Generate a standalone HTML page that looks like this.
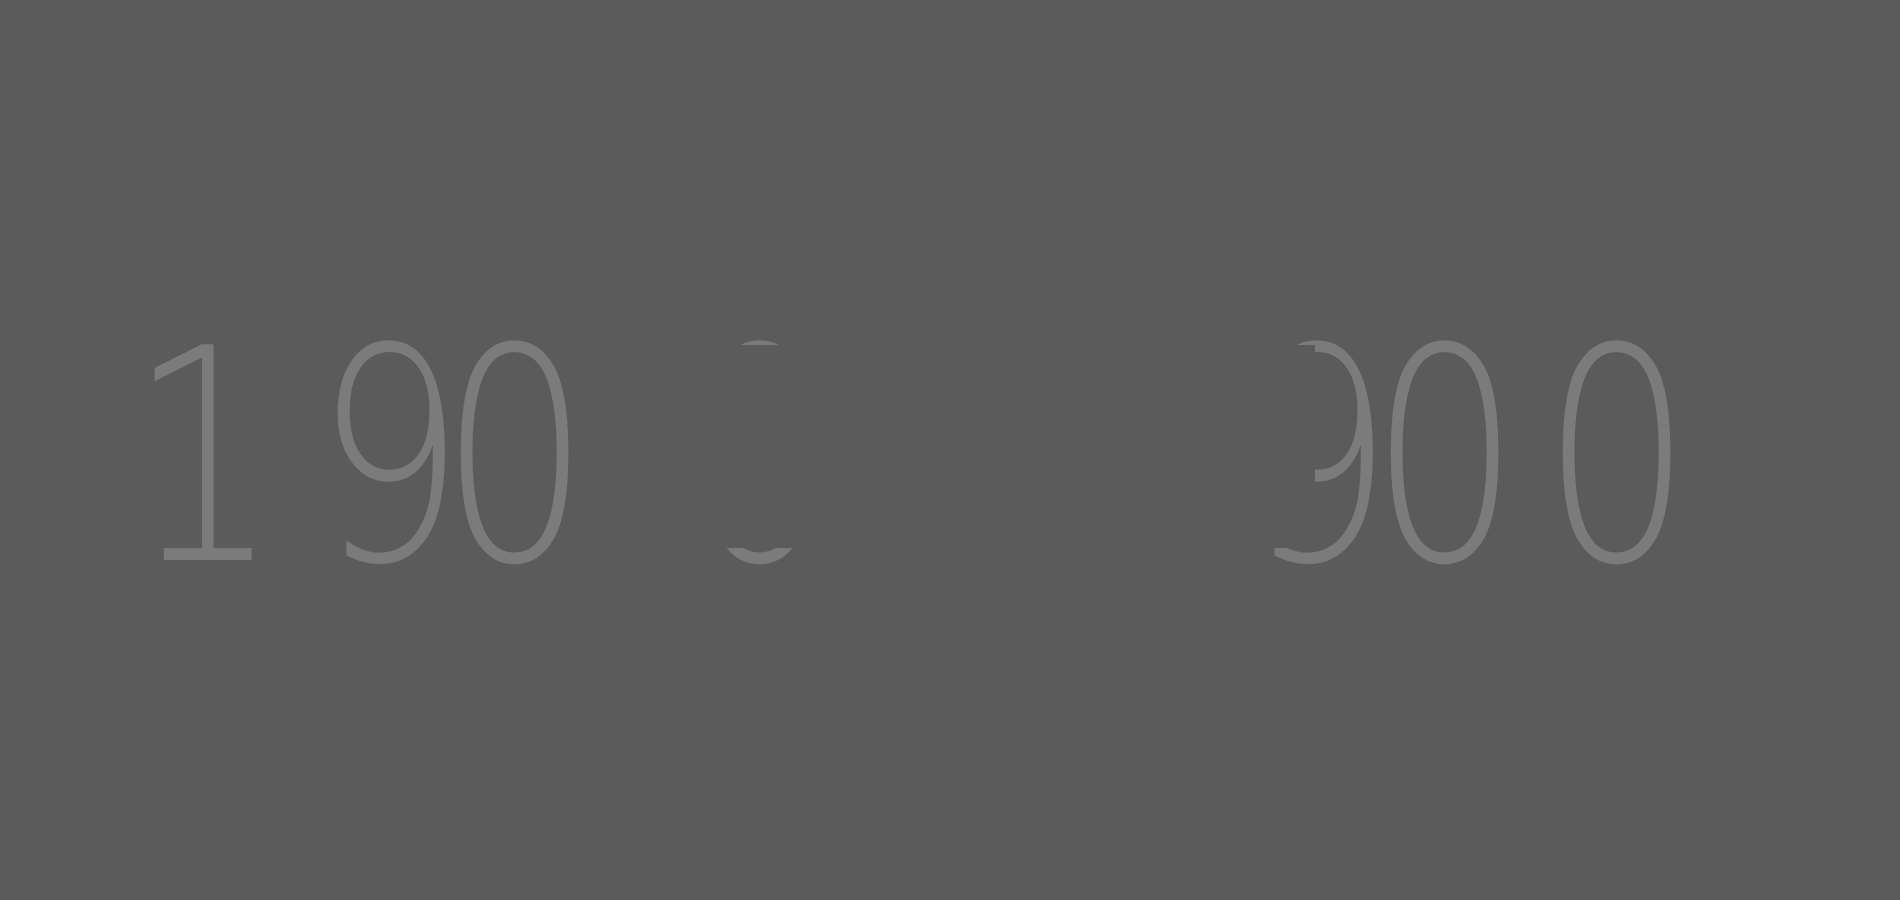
<!DOCTYPE html>
<html><head><meta charset="utf-8"><style>
html,body{margin:0;padding:0}
body{width:1900px;height:900px;background:#5b5b5b;position:relative;overflow:hidden}
.d{position:absolute;top:310px;font-family:"DejaVu Sans","Liberation Sans",sans-serif;font-weight:200;font-size:296px;line-height:1;color:#7b7b7b;width:300px;text-align:center;transform:scaleX(0.8);}
.c{position:absolute;left:570px;top:345px;width:745px;height:203px;background:#5b5b5b}
</style></head><body>
<span class="d" style="left:54px">1</span>
<span class="d" style="left:240px">9</span>
<span class="d" style="left:365px">0</span>
<span class="d" style="left:610px">0</span>
<span class="d" style="left:890px">×</span>
<span class="d" style="left:1168px">9</span>
<span class="d" style="left:1295px">0</span>
<span class="d" style="left:1467px">0</span>
<div class="c"></div>
</body></html>
